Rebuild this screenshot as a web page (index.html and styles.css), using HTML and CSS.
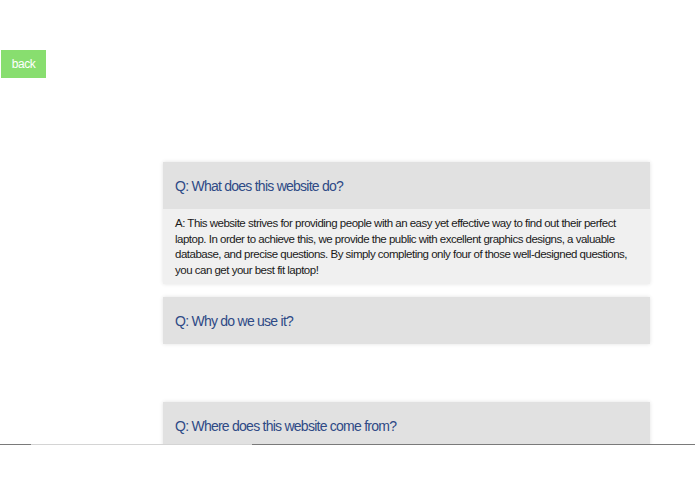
FILE: index.html
```html
<!DOCTYPE html>
<html>

<head>
  <meta charset="UTF-8">
  <meta name="viewport" content="width=device-width, initial-scale=1.0">
  <title>FAQ</title>
  <link rel="stylesheet" href="styles.css">
</head>

<body>
  <div class="top">
    <button class="back-btn">back</button>
  </div>

  <div class="faq">
    <div class="faq-item open">
      <div class="faq-q">Q: What does this website do?</div>
      <div class="faq-a">A: This website strives for providing people with an easy yet effective way to find out their perfect laptop. In order to achieve this, we provide the public with excellent graphics designs, a valuable database, and precise questions. By simply completing only four of those well-designed questions, you can get your best fit laptop!</div>
    </div>
    <div class="faq-item">
      <div class="faq-q">Q: Why do we use it?</div>
    </div>
    <div class="faq-item far">
      <div class="faq-q">Q: Where does this website come from?</div>
    </div>
  </div>

  <div class="footer">
    <span class="seg seg-dark seg-1"></span>
    <span class="seg seg-light"></span>
    <span class="seg seg-dark seg-3"></span>
  </div>
</body>

</html>
```

FILE: styles.css
```css
body {
  margin: 0;
  font-family: "Liberation Sans", Arial, sans-serif;
  background: #fff;
}

.top {
  padding: 50px 0 0 1px;
}

.back-btn {
  display: block;
  width: 45px;
  height: 28px;
  padding: 0;
  border: none;
  background: #88de6f;
  color: #fff;
  font-family: "Liberation Sans", Arial, sans-serif;
  font-size: 12px;
  letter-spacing: -0.5px;
}

.faq {
  margin: 84px 0 0 163px;
  width: 487px;
}

.faq-item {
  margin-bottom: 13px;
  box-shadow: 0 0 4px rgba(0, 0, 0, 0.12);
}

.faq-item.far {
  margin-top: 58px;
}

.faq-q {
  height: 47px;
  padding: 0 12px;
  display: flex;
  align-items: center;
  background: #e1e1e1;
  color: #2e4a86;
  font-size: 14px;
  letter-spacing: -0.75px;
}

.faq-a {
  padding: 7px 12px 6px;
  background: #f0f0f0;
  color: #1a1a1a;
  font-size: 11.5px;
  letter-spacing: -0.5px;
  line-height: 15.6px;
}

.footer {
  position: fixed;
  left: 0;
  right: 0;
  bottom: 0;
  height: 50px;
  background: #fff;
  display: flex;
  align-items: flex-start;
}

.seg {
  height: 1px;
}

.seg-dark {
  background: #7a7a7a;
}

.seg-light {
  width: 221px;
  background: #d4d4d4;
}

.seg-1 {
  width: 31px;
}

.seg-3 {
  flex: 1;
}
```
